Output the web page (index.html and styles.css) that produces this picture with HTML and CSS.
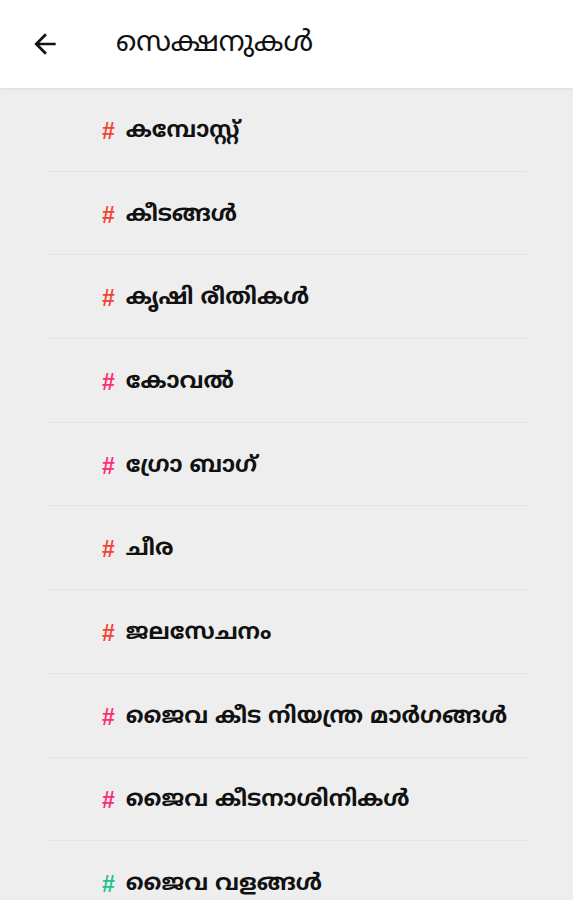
FILE: index.html
```html
<!DOCTYPE html>
<html lang="ml">
<head>
  <meta charset="UTF-8">
  <title>സെക്ഷനുകൾ</title>
  <meta name="viewport" content="width=device-width, initial-scale=1.0">
  <link rel="stylesheet" href="styles.css">
</head>
<body>

  <header class="app-bar">
    <button class="back-btn" aria-label="Back">
      <svg viewBox="0 0 24 24" width="32" height="32">
        <path d="M20 11H7.83l5.59-5.59L12 4l-8 8 8 8 1.41-1.41L7.83 13H20v-2z" fill="#111"/>
      </svg>
    </button>
    <h1 class="title">സെക്ഷനുകൾ</h1>
  </header>

  <ul class="sections">
    <li class="section"><span class="hash red">#</span>കമ്പോസ്റ്റ്</li>
    <li class="section"><span class="hash red">#</span>കീടങ്ങൾ</li>
    <li class="section"><span class="hash red">#</span>കൃഷി രീതികൾ</li>
    <li class="section"><span class="hash pink">#</span>കോവൽ</li>
    <li class="section"><span class="hash pink">#</span>ഗ്രോ ബാഗ്</li>
    <li class="section"><span class="hash red">#</span>ചീര</li>
    <li class="section"><span class="hash red">#</span>ജലസേചനം</li>
    <li class="section"><span class="hash pink">#</span>ജൈവ കീട നിയന്ത്ര മാർഗങ്ങൾ</li>
    <li class="section"><span class="hash pink">#</span>ജൈവ കീടനാശിനികൾ</li>
    <li class="section"><span class="hash green">#</span>ജൈവ വളങ്ങൾ</li>
  </ul>

</body>
</html>
```

FILE: styles.css
```css
* {
  box-sizing: border-box;
}

body {
  margin: 0;
  background: #eeeeee;
  font-family: "Noto Sans Malayalam", "Noto Sans", "DejaVu Sans", sans-serif;
  color: #111;
  overflow: hidden;
}

.app-bar {
  height: 88px;
  background: #fff;
  display: flex;
  align-items: center;
  box-shadow: 0 1px 3px rgba(0, 0, 0, 0.08);
  position: relative;
}

.back-btn {
  background: none;
  border: none;
  padding: 0;
  margin-left: 29px;
  width: 32px;
  height: 32px;
  display: flex;
  align-items: center;
  justify-content: center;
}

.title {
  margin: 0 0 0 55px;
  font-size: 28.3px;
  font-weight: 400;
  color: #111;
}

.sections {
  list-style: none;
  margin: 0;
  padding: 0 46px 0 48px;
}

.section {
  height: 83.7px;
  display: flex;
  align-items: center;
  padding: 4px 0 0 54px;
  border-bottom: 1px solid #e4e4e4;
  font-size: 22.6px;
  font-weight: 700;
}

.hash {
  font-family: "Liberation Sans", sans-serif;
  font-size: 23px;
  font-weight: 700;
  margin-right: 11px;
}

.red {
  color: #f44336;
}

.pink {
  color: #ff2d6f;
}

.green {
  color: #1fbf8f;
}
```
